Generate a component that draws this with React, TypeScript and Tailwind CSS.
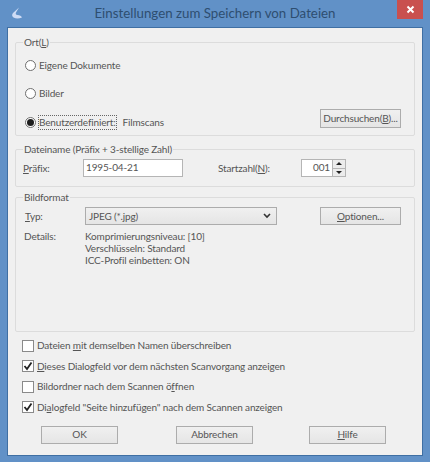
const Radio = ({ checked, label, dotted }: { checked?: boolean; label: string; dotted?: boolean }) => (
  <div className="flex items-center gap-[3px] h-[13px]">
    <span className="w-[11px] h-[11px] rounded-full border border-[#6f6f6f] bg-white flex items-center justify-center">
      {checked && <span className="w-[7px] h-[7px] rounded-full bg-[#1c1c1c]" />}
    </span>
    <span className={dotted ? 'outline-1 outline-dotted outline-[#666]' : ''}>{label}</span>
  </div>
);

const Check = ({ checked, children }: { checked?: boolean; children: React.ReactNode }) => (
  <div className="flex items-center gap-[3px] h-[13px]">
    <span className="w-[12px] h-[12px] border border-[#8a8a8a] bg-white flex items-center justify-center">
      {checked && (
        <svg width="10" height="10" viewBox="0 0 10 10">
          <path d="M1.5 5 L4 8 L8.5 1.5" fill="none" stroke="#222" strokeWidth="1.8" />
        </svg>
      )}
    </span>
    <span>{children}</span>
  </div>
);

const Btn = ({ children, className }: { children: React.ReactNode; className: string }) => (
  <button className={`border border-[#acacac] bg-gradient-to-b from-[#f0f0f0] to-[#e5e5e5] text-[#555] flex items-center justify-center ${className}`}>
    {children}
  </button>
);

const Group = ({ title, className, children }: { title: string | React.ReactNode; className: string; children: React.ReactNode }) => (
  <fieldset className={`border border-[#dcdcdc] rounded-[2px] ${className}`}>
    <legend className="ml-[7px] px-px leading-[13px]">{title}</legend>
    {children}
  </fieldset>
);

export default function App() {
  return (
    <div
      className="w-[430px] h-[462px] bg-[#6191c7] flex flex-col px-[7px] pb-[6px] text-[10px] leading-[13px] tracking-[-0.15px] text-[#555] overflow-hidden"
      style={{ fontFamily: 'Lato, "Open Sans", sans-serif' }}
    >
      <div className="h-[27px] shrink-0 flex items-start">
        <div className="w-[26px] pt-[7px] pl-[3px]">
          <svg width="13" height="13" viewBox="0 0 13 13">
            <path d="M9 0.5 L3 6 Q1 8.5 3.5 10.5 Q7 12.5 12 10.5 Q11 8 7.5 8 Q5 7.5 6 5.5 Z" fill="#cfdcf5" />
          </svg>
        </div>
        <div className="flex-1 text-center text-[13.3px] tracking-normal leading-[27px] text-[#2e4e70]">Einstellungen zum Speichern von Dateien</div>
        <div className="w-[26px] h-[19px] bg-[#c9504f] flex items-center justify-center">
          <svg width="9" height="9" viewBox="0 0 9 9">
            <path d="M1.5 1.5 L7.5 7.5 M7.5 1.5 L1.5 7.5" stroke="#fff" strokeWidth="2" />
          </svg>
        </div>
      </div>

      <div className="flex-1 bg-[#f0f0f0] border border-[#3f6fa3] px-[7px] pt-[8px] flex flex-col">
        <Group title={<>Ort(<u>L</u>)</>} className="h-[100px] shrink-0">
          <div className="flex flex-col gap-[15px] pl-[9px] pt-[10px]">
            <Radio label="Eigene Dokumente" />
            <Radio label="Bilder" />
            <div className="flex items-center justify-between pr-[13px] h-[13px] mt-px">
              <div className="flex items-center gap-[7px]">
                <Radio checked dotted label="Benutzerdefiniert:" />
                <span>Filmscans</span>
              </div>
              <Btn className="w-[81px] h-[19px] -mt-[8px]"><span>Durchsuchen(<u>B</u>)...</span></Btn>
            </div>
          </div>
        </Group>

        <Group title="Dateiname (Präfix + 3-stellige Zahl)" className="mt-[7px] h-[44px] shrink-0">
          <div className="flex items-center pl-[7px] pt-[3px]">
            <span className="w-[60px]"><u>P</u>räfix:</span>
            <div className="w-[100px] h-[18px] border border-[#b5b5b5] bg-white pl-[2px] leading-[15px]">1995-04-21</div>
            <span className="ml-[35px] w-[83px]">Startzahl(<u>N</u>):</span>
            <div className="w-[45px] h-[18px] border border-[#b5b5b5] bg-white flex">
              <span className="flex-1 text-right pr-[2px] leading-[15px]">001</span>
              <div className="w-[13px] flex flex-col border-l border-[#b5b5b5] bg-[#ececec]">
                <div className="flex-1 flex items-center justify-center border-b border-[#b5b5b5]">
                  <span className="w-0 h-0 border-x-[3px] border-x-transparent border-b-[3px] border-b-[#222]" />
                </div>
                <div className="flex-1 flex items-center justify-center">
                  <span className="w-0 h-0 border-x-[3px] border-x-transparent border-t-[3px] border-t-[#222]" />
                </div>
              </div>
            </div>
          </div>
        </Group>

        <Group title="Bildformat" className="mt-[4px] h-[141px] shrink-0">
          <div className="flex items-center pl-[9px] pt-[3px] pr-[13px]">
            <span className="w-[60px]"><u>T</u>yp:</span>
            <div className="w-[192px] h-[18px] border border-[#acacac] bg-gradient-to-b from-[#f0f0f0] to-[#e5e5e5] flex items-center justify-between pl-[3px] pr-[5px]">
              <span>JPEG (*.jpg)</span>
              <svg width="8" height="6" viewBox="0 0 8 6">
                <path d="M1 1 L4 4 L7 1" fill="none" stroke="#333" strokeWidth="1.6" />
              </svg>
            </div>
            <Btn className="w-[81px] h-[18px] ml-auto"><span><u>O</u>ptionen...</span></Btn>
          </div>
          <div className="flex pl-[8px] pt-[5px] leading-[12px]">
            <span className="w-[61px]">Details:</span>
            <div>
              <div>Komprimierungsniveau: [10]</div>
              <div>Verschlüsseln: Standard</div>
              <div>ICC-Profil einbetten: ON</div>
            </div>
          </div>
        </Group>

        <div className="flex flex-col gap-[7.5px] pl-[7px] pt-[7px]">
          <Check>Dateien <u>m</u>it demselben Namen überschreiben</Check>
          <Check checked><u>D</u>ieses Dialogfeld vor dem nächsten Scanvorgang anzeigen</Check>
          <Check>Bildordner nach dem Scannen ö<u>f</u>fnen</Check>
          <Check checked>Di<u>a</u>logfeld "Seite hinzufügen" nach dem Scannen anzeigen</Check>
        </div>

        <div className="flex pl-[26px] pt-[12px]">
          <Btn className="w-[77px] h-[18px] border-[#6fa3c9]">OK</Btn>
          <Btn className="w-[77px] h-[18px] ml-[58px]">Abbrechen</Btn>
          <Btn className="w-[77px] h-[18px] ml-[56px]"><span><u>H</u>ilfe</span></Btn>
        </div>
      </div>
    </div>
  );
}
